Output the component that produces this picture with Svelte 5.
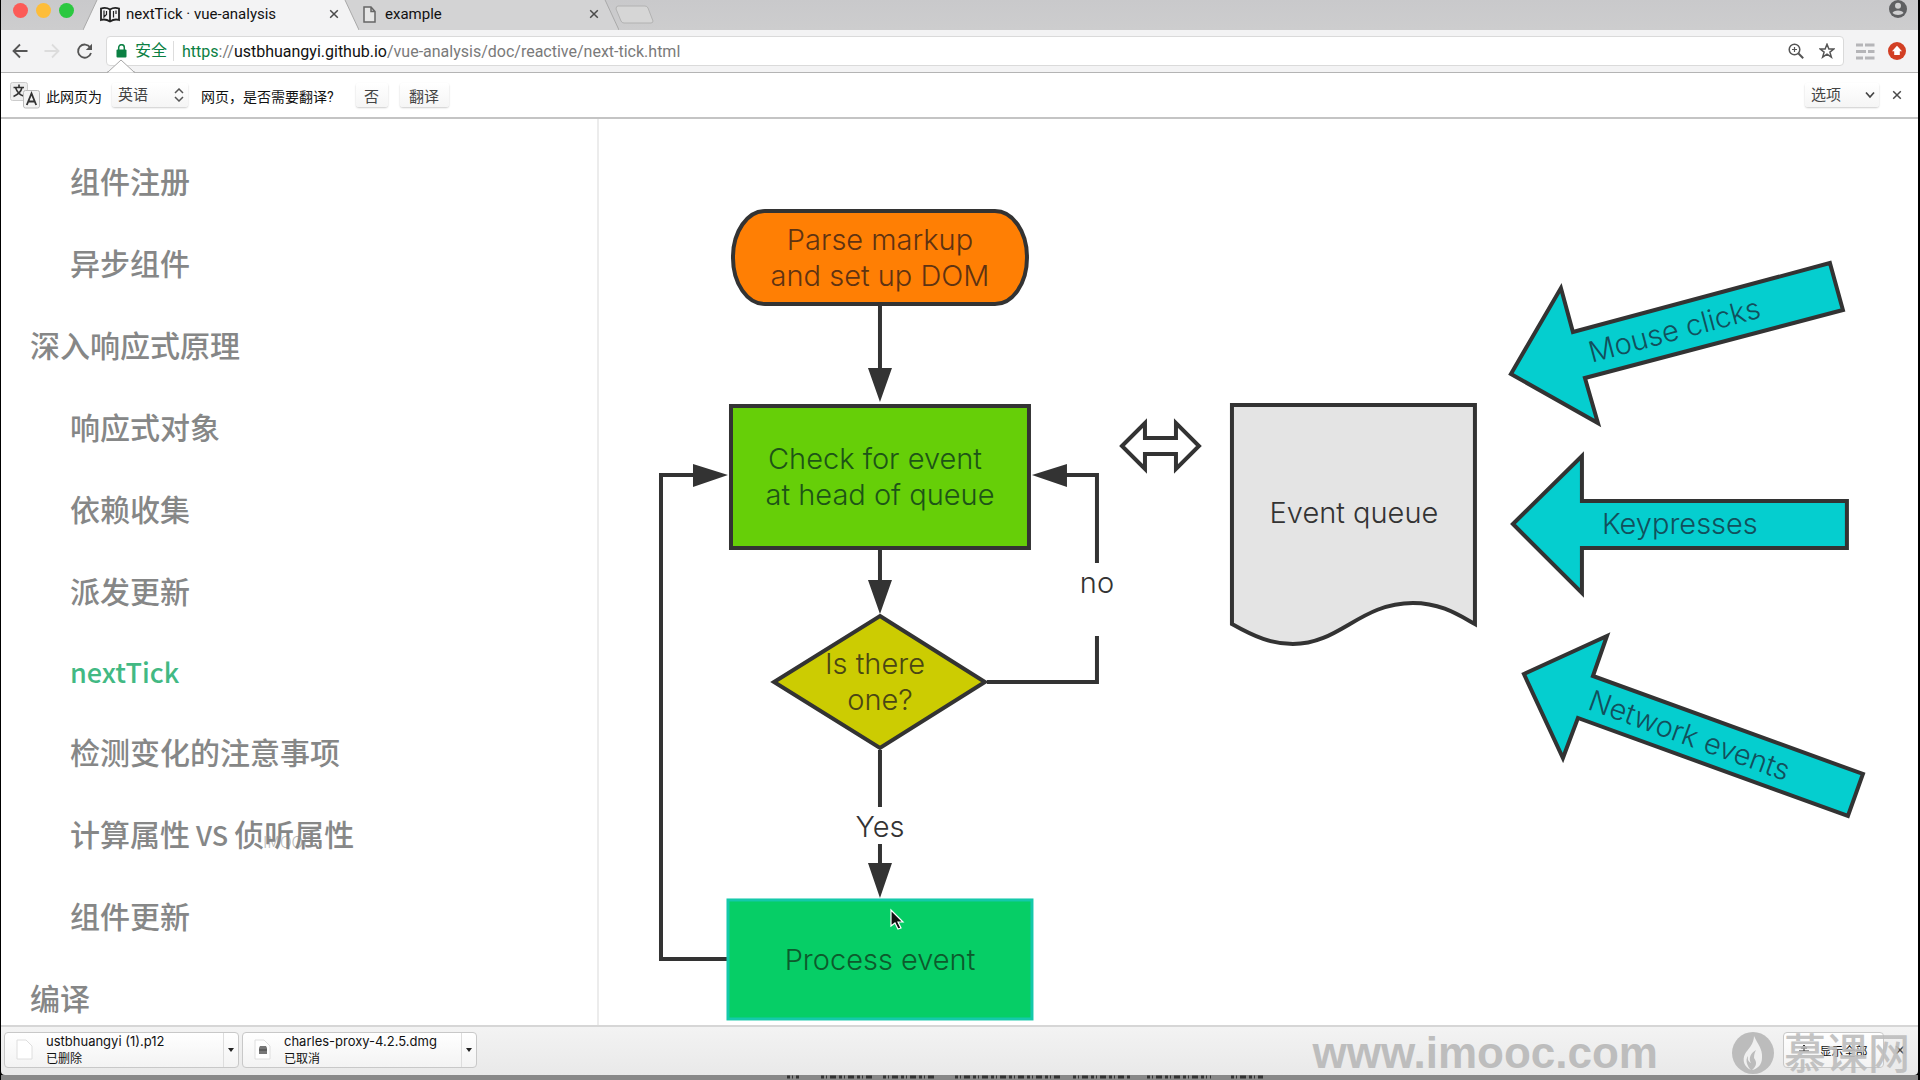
<script>
  const chapters = [
    { parts: ['组件注册'], level: 2 },
    { parts: ['异步组件'], level: 2 },
    { parts: ['深入响应式原理'], level: 1 },
    { parts: ['响应式对象'], level: 2 },
    { parts: ['依赖收集'], level: 2 },
    { parts: ['派发更新'], level: 2 },
    { parts: ['', 'nextTick'], level: 2, current: true },
    { parts: ['检测变化的注意事项'], level: 2 },
    { parts: ['计算属性', ' VS ', '侦听属性'], level: 2, mark: 'IMOOC' },
    { parts: ['组件更新'], level: 2 },
    { parts: ['编译'], level: 1 }
  ];

  const downloads = [
    { name: 'ustbhuangyi (1).p12', state: '已删除', disk: false },
    { name: 'charles-proxy-4.2.5.dmg', state: '已取消', disk: true }
  ];
</script>

{#snippet cross()}
  <svg width="10" height="10" viewBox="0 0 10 10" aria-hidden="true">
    <path d="M1.2 1.2 8.8 8.8M8.8 1.2 1.2 8.8" stroke="#4a4a4a" stroke-width="1.5" fill="none" />
  </svg>
{/snippet}

<div class="window">
  <header class="tabs">
    <div class="lights">
      <button class="light close" aria-label="关闭"></button>
      <button class="light mini" aria-label="最小化"></button>
      <button class="light full" aria-label="全屏"></button>
    </div>
    <div class="tab active">
      <svg class="shape" viewBox="0 0 276 30" preserveAspectRatio="none" aria-hidden="true">
        <path d="M0 30 14 0H262L276 30Z" fill="#f3f3f4" />
        <path d="M0 30 14 0M262 0 276 30" stroke="#a9a9a9" fill="none" />
      </svg>
      <svg class="fav" width="20" height="17" viewBox="0 0 20 17" aria-hidden="true">
        <path d="M1 2.5C4 1.5 7 1.5 10 3.5 13 1.5 16 1.5 19 2.5V14C16 13 13 13.500 10 15.500 7 13.500 4 13 1 14ZM10 3.500V15" fill="none" stroke="#222" stroke-width="1.800" />
        <path d="M4 4.500V11L6.500 8.500V5M13.500 5V11.500M16 4.500V8" fill="none" stroke="#222" stroke-width="1.200" />
      </svg>
      <span class="title">nextTick · vue-analysis</span>
      <button class="x" aria-label="关闭标签页">{@render cross()}</button>
    </div>
    <div class="tab idle">
      <svg class="shape" viewBox="0 0 276 30" preserveAspectRatio="none" aria-hidden="true">
        <path d="M0 0H262L276 30H14Z" fill="#d3d3d4" />
        <path d="M262 0 276 30" stroke="#a9a9a9" fill="none" />
      </svg>
      <svg class="fav" width="13" height="17" viewBox="0 0 13 17" aria-hidden="true">
        <path d="M1 1H8L12 5.500V16H1ZM8 1V5.500H12" fill="#e6e6e6" stroke="#666" stroke-width="1.500" />
      </svg>
      <span class="title">example</span>
      <button class="x" aria-label="关闭标签页">{@render cross()}</button>
    </div>
    <button class="newtab" aria-label="新标签页">
      <svg width="40" height="20" viewBox="0 0 40 20" aria-hidden="true">
        <path d="M3 1H30Q32 1 33 3L38 16Q38 18 36 18H9Q7 18 6 16L1 4Q1 1 3 1Z" fill="#d6d6d6" stroke="#b2b2b2" />
      </svg>
    </button>
    <span class="grow"></span>
    <button class="avatar" aria-label="用户">
      <svg width="18" height="18" viewBox="0 0 18 18" aria-hidden="true">
        <circle cx="9" cy="9" r="9" fill="#5f6062" />
        <circle cx="9" cy="5.800" r="3" fill="#d0d0d1" />
        <path d="M3.500 13C4 9.500 14 9.500 14.500 13 12 15.500 6 15.500 3.500 13Z" fill="#d0d0d1" />
      </svg>
    </button>
  </header>

  <div class="toolbar">
    <button aria-label="后退">
      <svg width="16" height="16" viewBox="0 0 16 16" aria-hidden="true"><path d="M15.500 8H1.500M8 1.500 1.500 8 8 14.500" fill="none" stroke="#555" stroke-width="1.800" /></svg>
    </button>
    <button aria-label="前进">
      <svg width="16" height="16" viewBox="0 0 16 16" aria-hidden="true"><path d="M.5 8H14.500M8 1.500 14.500 8 8 14.500" fill="none" stroke="#dcdcdc" stroke-width="1.800" /></svg>
    </button>
    <button aria-label="重新加载">
      <svg width="17" height="17" viewBox="0 0 17 17" aria-hidden="true"><path d="M14.200 4.500A6.600 6.600 0 1 0 15 10" fill="none" stroke="#555" stroke-width="1.800" /><path d="M16 .8V7H9.800Z" fill="#555" /></svg>
    </button>
    <div class="omnibox">
      <svg width="11" height="14" viewBox="0 0 11 14" aria-hidden="true"><rect x="0.500" y="5.500" width="10" height="8" rx="1" fill="#0b8043" /><path d="M2.700 6V3.500a2.800 2.800 0 0 1 5.600 0V6" fill="none" stroke="#0b8043" stroke-width="1.500" /></svg>
      <span class="secure">安全</span>
      <div class="url" role="textbox" tabindex="0" contenteditable="true" aria-label="地址"><span class="scheme">https</span><span class="path">://</span>ustbhuangyi.github.io<span class="path">/vue-analysis/doc/reactive/next-tick.html</span></div>
      <button aria-label="缩放">
        <svg width="16" height="16" viewBox="0 0 16 16" aria-hidden="true"><circle cx="6.500" cy="6.500" r="5.300" fill="none" stroke="#555" stroke-width="1.500" /><path d="M10.500 10.500 15.200 15.200" stroke="#555" stroke-width="2" /><path d="M6.500 4V9M4 6.500H9" stroke="#555" stroke-width="1.200" /></svg>
      </button>
      <button aria-label="添加书签">
        <svg width="16" height="16" viewBox="0 0 16 16" aria-hidden="true"><path d="M8 1.300 9.900 6H14.900L10.900 9.100 12.400 14.200 8 11.200 3.600 14.200 5.100 9.100 1.100 6H6.100Z" fill="none" stroke="#555" stroke-width="1.500" /></svg>
      </button>
    </div>
    <button class="ext" aria-label="扩展程序">
      <svg width="19" height="17" viewBox="0 0 19 17" aria-hidden="true"><path d="M0 2H7M9 2H18.500M0 8.500H10M12 8.500H18.500M0 15H7M9 15H18.500" stroke="#b5b5b8" stroke-width="3.200" /></svg>
    </button>
    <button aria-label="更新">
      <svg width="18" height="18" viewBox="0 0 18 18" aria-hidden="true"><circle cx="9" cy="9" r="9" fill="#d23f24" /><path d="M9 3.800 14 9.300H11.800V13H6.200V9.300H4Z" fill="#fff" /></svg>
    </button>
    <svg class="notch" width="28" height="14" viewBox="0 0 28 14" aria-hidden="true"><path d="M1 13.500 14 0 27 13.500Z" fill="#fff" /><path d="M0 13 1 13 14 1 27 13H28" fill="none" stroke="#a8a8a8" /></svg>
  </div>

  <form class="infobar">
    <svg width="30" height="27" viewBox="0 0 30 27" aria-hidden="true">
      <rect x="0.500" y="0.500" width="17" height="18" rx="2" fill="#eee" stroke="#ccc" />
      <path d="M3.500 5.500H14M9 2.500V5.500M12 5.500C11 10 7 13 3.500 14.500M5.500 5.500C7 10 10 13 13.500 14" fill="none" stroke="#333" stroke-width="1.600" />
      <rect x="13.500" y="8.500" width="16" height="17.500" rx="2" fill="#f3f3f3" stroke="#bbb" />
      <path d="M16.800 23 21.500 11.500 26.200 23M18.500 19.500H24.500" fill="none" stroke="#333" stroke-width="1.800" />
    </svg>
    <label for="lang">此网页为</label>
    <div class="pick lang">
      <select id="lang"><option>英语</option></select>
      <svg width="10" height="14" viewBox="0 0 10 14" aria-hidden="true"><path d="M1 5 5 1 9 5M1 9 5 13 9 9" fill="none" stroke="#555" stroke-width="1.500" /></svg>
    </div>
    <span class="ask">网页，是否需要翻译?</span>
    <button type="button" class="soft">否</button>
    <button type="button" class="soft wide">翻译</button>
    <span class="grow"></span>
    <div class="pick opts">
      <select aria-label="选项"><option>选项</option></select>
      <svg width="10" height="8" viewBox="0 0 10 8" aria-hidden="true"><path d="M1 1.500 5 6 9 1.500" fill="none" stroke="#444" stroke-width="1.700" /></svg>
    </div>
    <button type="button" class="x" aria-label="关闭">{@render cross()}</button>
  </form>

  <main>
    <nav aria-label="目录">
      <ul>
        {#each chapters as c}
          <li class:top={c.level === 1} class:current={c.current}>
            <a href="#{c.parts.join('')}">{#each c.parts as part, i}<span class:latin={i === 1}>{part}</span>{/each}</a>{#if c.mark}<small>{c.mark}</small>{/if}
          </li>
        {/each}
      </ul>
    </nav>
    <section>
      <svg class="diagram" viewBox="599 119 1319 906" role="img" aria-label="Event loop">
        <g class="line">
          <path d="M880 306V372M880 549V584M880 750V807M880 844V866M727 959H661V475H696M1064 475H1097V563M1097 636V682H987" />
        </g>
        <g class="head">
          <path d="M868 368H892L880 402ZM868 580H892L880 614ZM868 863H892L880 898ZM693 464V487L728 475ZM1067 464V487L1032 475Z" />
        </g>
        <g class="shape-line">
          <rect x="733" y="211" width="294" height="93" rx="32" ry="46" fill="#ff7f04" />
          <rect x="731" y="406" width="298" height="142" fill="#66cf08" />
          <path d="M880 616 985 682 880 748 774 682Z" fill="#cccc02" />
          <path d="M1232 405H1475V624C1457 614 1440 603 1413 603 1360 603 1340 644 1293 644 1272 644 1255 637 1232 624Z" fill="#e4e4e4" />
          <path d="M1122 446 1145 423V438H1176V423L1199 446 1176 469V454H1145V469Z" fill="#fff" />
          <path d="M1830 263 1843 310 1585 378 1598 423 1511 374 1561 288 1573 332Z" fill="#05cecf" />
          <path d="M1513 524 1582 456V501H1847V548H1582V593Z" fill="#05cecf" />
          <path d="M1524 674 1607 636 1593 676 1863 774 1848 816 1578 718 1563 758Z" fill="#05cecf" />
        </g>
        <rect x="728" y="900" width="304" height="119" fill="#06ce66" stroke="#14c9aa" stroke-width="3" />
        <g class="words">
          <text x="880" y="250" fill="#5f3312">Parse markup</text>
          <text x="880" y="286" fill="#5f3312">and set up DOM</text>
          <text x="875" y="469" fill="#1d5417">Check for event</text>
          <text x="880" y="505" fill="#1d5417">at head of queue</text>
          <text x="875" y="674" fill="#4a4614">Is there</text>
          <text x="880" y="710" fill="#4a4614">one?</text>
          <text x="1097" y="593">no</text>
          <text x="880" y="837">Yes</text>
          <text x="880" y="970" fill="#0d5a2c">Process event</text>
          <text x="1354" y="523">Event queue</text>
          <text x="1680" y="534" fill="#12505c">Keypresses</text>
          <text transform="translate(1677 340) rotate(-15)" fill="#12505c">Mouse clicks</text>
          <text transform="translate(1686 745) rotate(20)" fill="#12505c">Network events</text>
        </g>
        <path d="M891 910V926L895 923 898 929 901 928 898 922H903Z" fill="#111" stroke="#fff" stroke-width="1.200" />
      </svg>
    </section>
  </main>

  <footer>
    {#each downloads as d}
      <div class="item">
        <svg width="20" height="22" viewBox="0 0 20 22" aria-hidden="true">
          <path d="M2 1H11L17 7V20H2Z" fill="#fff" stroke="#dedede" />
          {#if d.disk}<path d="M6 9 7 7H13L14 9V15H6Z" fill="#777" /><path d="M6 11H14" stroke="#444" />{/if}
        </svg>
        <button class="file"><span>{d.name}</span><span class="state">{d.state}</span></button>
        <button class="more" aria-label="更多操作">
          <svg width="6" height="4" viewBox="0 0 6 4" aria-hidden="true"><path d="M0 0H6L3 4Z" fill="#222" /></svg>
        </button>
      </div>
    {/each}
    <span class="grow"></span>
    <button class="all">
      <svg width="10" height="10" viewBox="0 0 10 10" aria-hidden="true"><path d="M5 0 8 3H2ZM0 6H10M5 3V6" fill="#333" stroke="#333" /></svg>
      显示全部
    </button>
    <button class="x" aria-label="关闭下载栏">{@render cross()}</button>
    <div class="brand">
      <span class="site">www.imooc.com</span>
      <svg width="42" height="42" viewBox="0 0 42 42" aria-hidden="true">
        <circle cx="21" cy="21" r="21" fill="#bcbcbc" />
        <path d="M22 4C25 11 31 17 30 26 30 32 26 37 20 38 25 34 25 30 22 26 22 22 23 20 24 18 19 21 16 26 19 31 15 29 16 26 16 24 13 28 15 34 19 38 12 35 10 28 13 22 16 17 22 12 22 4Z" fill="#efefef" />
      </svg>
      <span class="cn">慕课网</span>
    </div>
  </footer>
  <div class="behind">
    <svg width="520" height="5" viewBox="0 0 520 5" aria-hidden="true">
      <path d="M16 2H28M50 2H104M112 2H166M184 2H292M302 2H360M376 2H440M460 2H492" stroke="#333" stroke-width="3" stroke-dasharray="3 2 1 3 6 3" />
    </svg>
  </div>
</div>

<style>
  :global(body) {
    margin: 0;
    background: #000;
  }
  .window {
    display: flex;
    flex-direction: column;
    height: 100vh;
    box-sizing: border-box;
    padding: 0 2px 0 1px;
    overflow: hidden;
    font-family: Roboto, 'Noto Sans CJK SC', sans-serif;
    color: #111;
  }
  button,
  select {
    font: inherit;
    color: inherit;
    border: 0;
    padding: 0;
    background: none;
  }
  button {
    display: flex;
    align-items: center;
    justify-content: center;
  }
  svg {
    flex: none;
  }
  .grow {
    flex: 1;
  }

  .tabs {
    display: flex;
    flex: none;
    height: 30px;
    background: linear-gradient(#c9c9cb, #cdcdce);
    overflow: hidden;
  }
  .lights {
    display: flex;
    gap: 8px;
    width: 70px;
    padding: 3px 0 0 12px;
  }
  .light {
    width: 15px;
    height: 15px;
    border-radius: 50%;
  }
  .close {
    background: #fc5b57;
  }
  .mini {
    background: #fdbd3a;
  }
  .full {
    background: #2bc840;
  }
  .tab {
    position: relative;
    display: flex;
    align-items: center;
    box-sizing: border-box;
    width: 276px;
    height: 30px;
    padding: 0 20px 2px 17px;
    gap: 6px;
    font-size: 15px;
  }
  .active {
    z-index: 1;
  }
  .idle {
    margin-left: -14px;
    width: 274px;
    padding-left: 18px;
    gap: 9px;
  }
  .shape {
    position: absolute;
    inset: 0;
    width: 100%;
    height: 100%;
  }
  .fav,
  .title,
  .tab .x {
    position: relative;
  }
  .title {
    flex: 1;
    white-space: nowrap;
  }
  .newtab {
    align-self: center;
    margin-left: -4px;
  }
  .avatar {
    height: 18px;
    margin-right: 11px;
  }

  .toolbar {
    position: relative;
    display: flex;
    align-items: center;
    flex: none;
    gap: 16px;
    height: 43px;
    box-sizing: border-box;
    padding: 0 12px 0 11px;
    background: #f3f3f4;
    border-bottom: 1px solid #b4b4b4;
  }
  .omnibox {
    display: flex;
    align-items: center;
    flex: 1;
    gap: 8px;
    height: 30px;
    box-sizing: border-box;
    margin: 0 -4px 0 -3px;
    padding: 0 8px 0 9px;
    background: #fff;
    border: 1px solid #dadada;
    border-radius: 4px;
  }
  .omnibox button + button {
    margin-left: 7px;
  }
  .secure {
    padding-right: 6px;
    border-right: 1px solid #ddd;
    color: #0b8043;
    font-size: 16px;
    line-height: 20px;
  }
  .url {
    flex: 1;
    font-size: 16px;
    white-space: nowrap;
  }
  .scheme {
    color: #0b8043;
  }
  .path {
    color: #7a7a7a;
  }
  .ext {
    margin-right: -3px;
  }
  .notch {
    position: absolute;
    left: 106px;
    bottom: -1px;
  }

  .infobar {
    display: flex;
    align-items: center;
    flex: none;
    height: 46px;
    box-sizing: border-box;
    padding: 0 16px 0 9px;
    background: #fff;
    border-bottom: 2px solid #c4c4c4;
    font-size: 14px;
  }
  .infobar label {
    margin: 2px 10px 0 6px;
  }
  .pick {
    display: grid;
    align-items: center;
    height: 24px;
    background: linear-gradient(#fff, #f5f5f5);
    border-radius: 3px;
    box-shadow: 0 1px 2px #ccc;
    color: #444;
    font-size: 15px;
  }
  .pick > * {
    grid-area: 1 / 1;
  }
  .pick select {
    appearance: none;
    width: 100%;
    height: 24px;
    padding-left: 6px;
  }
  .pick svg {
    justify-self: end;
    margin-right: 4px;
    pointer-events: none;
  }
  .lang {
    width: 76px;
  }
  .opts {
    width: 74px;
    margin-right: 13px;
  }
  .ask {
    margin: 2px 22px 0 13px;
  }
  .soft {
    width: 32px;
    height: 24px;
    margin-right: 12px;
    background: linear-gradient(#fff, #f5f5f5);
    border-radius: 3px;
    box-shadow: 0 1px 2px #ccc;
    color: #444;
    font-size: 15px;
  }
  .wide {
    width: 49px;
  }

  main {
    display: flex;
    flex: 1;
    min-height: 0;
    background: #fff;
  }
  nav {
    width: 31.200%;
    box-sizing: border-box;
    border-right: 2px solid #ececec;
    overflow: hidden;
  }
  ul {
    margin: 0;
    padding: 20px 0 0;
    list-style: none;
    font-family: 'Noto Sans CJK SC', sans-serif;
    font-size: 30px;
    font-weight: 500;
    line-height: 82px;
    color: #868787;
  }
  li {
    position: relative;
    height: 82px;
    padding-left: 69px;
    white-space: nowrap;
  }
  li.top {
    padding-left: 29px;
  }
  li.current {
    height: 79px;
    line-height: 79px;
    color: #42b983;
  }
  li a {
    color: inherit;
    text-decoration: none;
  }
  .latin {
    font-size: 27px;
    white-space: pre;
  }
  li small {
    position: absolute;
    left: 262px;
    top: 8px;
    font-size: 16px;
    font-weight: 300;
    opacity: 0.6;
  }
  section {
    flex: 1;
    min-width: 0;
  }
  .diagram {
    display: block;
    width: 100%;
    height: 100%;
  }
  .line {
    fill: none;
    stroke: #333;
    stroke-width: 4px;
  }
  .head {
    fill: #333;
  }
  .shape-line {
    stroke: #333;
    stroke-width: 4px;
  }
  .words {
    font-family: Inter, sans-serif;
    font-size: 29px;
    font-weight: 350;
    text-anchor: middle;
    fill: #333;
  }

  footer {
    position: relative;
    display: flex;
    align-items: center;
    flex: none;
    gap: 3px;
    height: 50px;
    box-sizing: border-box;
    padding: 0 13px 2px 3px;
    background: linear-gradient(#f3f3f3, #e9e9e9);
    border-top: 2px solid #d6d6d6;
    border-radius: 0 0 4px 4px;
    font-size: 13px;
  }
  .item {
    display: flex;
    align-items: center;
    width: 235px;
    height: 36px;
    box-sizing: border-box;
    padding-left: 10px;
    gap: 11px;
    background: linear-gradient(#fff, #f3f3f3);
    border: 1px solid #c8c8c8;
    border-radius: 4px;
  }
  .file {
    flex: 1;
    flex-direction: column;
    align-items: flex-start;
    font-family: Inter, 'Noto Sans CJK SC', sans-serif;
    line-height: 17px;
    white-space: nowrap;
  }
  .state {
    font-size: 12px;
  }
  .more {
    width: 15px;
    height: 34px;
    border-left: 1px solid #ddd;
  }
  .all {
    gap: 10px;
    width: 101px;
    height: 36px;
    background: linear-gradient(#fff, #f3f3f3);
    border: 1px solid #c8c8c8;
    border-radius: 4px;
    font-size: 12px;
  }
  footer > .x {
    margin-left: 8px;
  }
  .brand {
    position: absolute;
    right: 8px;
    top: 4px;
    display: flex;
    align-items: center;
    height: 44px;
    color: #bdbdbd;
    pointer-events: none;
  }
  .site {
    margin-right: 74px;
    font: bold 44px/44px 'Liberation Sans', sans-serif;
  }
  .cn {
    margin-left: 10px;
    font: 500 42px/40px 'Noto Sans CJK SC', sans-serif;
    padding-bottom: 4px;
    opacity: 0.9;
  }
  .behind {
    flex: none;
    height: 5px;
    padding-left: 770px;
    background: #888;
    line-height: 0;
  }
</style>
